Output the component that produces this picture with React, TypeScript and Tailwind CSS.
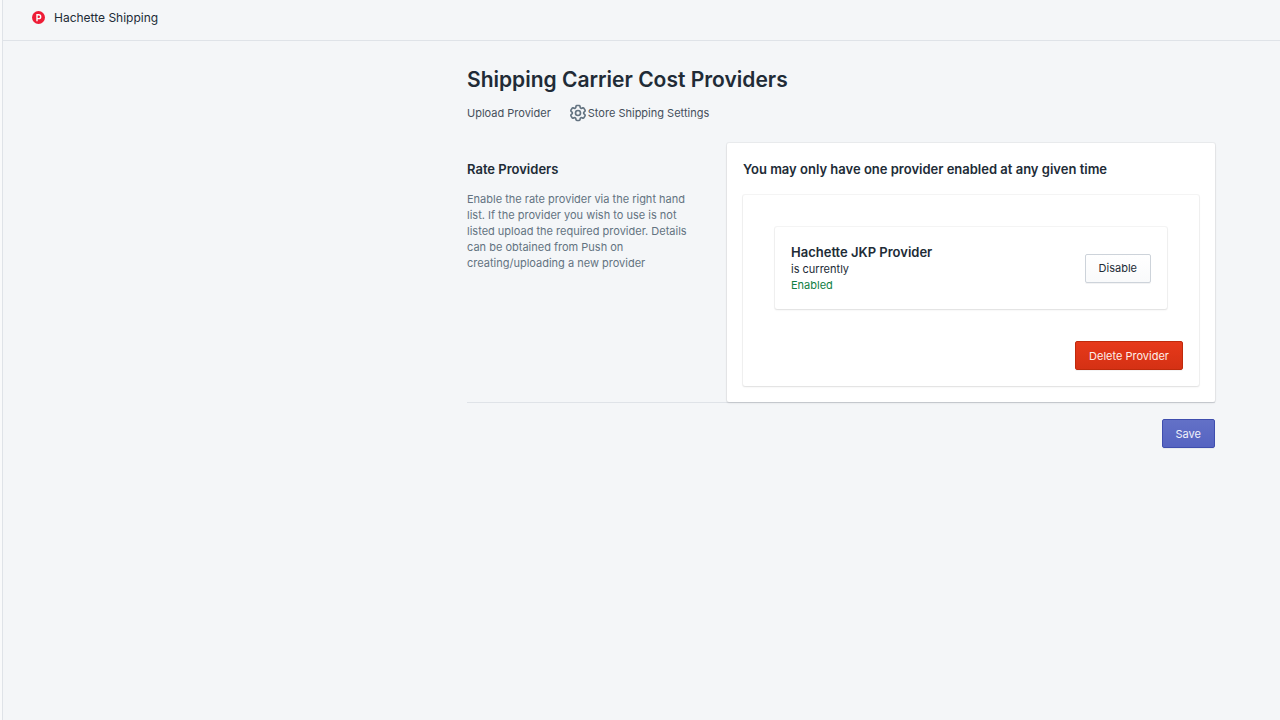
import type { ButtonHTMLAttributes } from "react";
import { clsx } from "clsx";
import { HiOutlineCog6Tooth } from "react-icons/hi2";

type Tone = "plain" | "danger" | "primary";

const tones: Record<Tone, string> = {
  plain: "border-[#cdd3da] bg-linear-to-b from-white to-[#f9fafb] text-[#212b36]",
  danger: "border-[#bf2a0c] bg-linear-to-b from-[#e6391a] to-[#d53114] text-[#fdeeea]",
  primary: "border-[#3f4eae] bg-linear-to-b from-[#6371c7] to-[#5563c1] text-[#f1f2fb]",
};

function Button({ tone = "plain", ...props }: ButtonHTMLAttributes<HTMLButtonElement> & { tone?: Tone }) {
  return (
    <button
      type="button"
      className={clsx(
        "h-[29px] shrink-0 rounded-xs border px-[13px] text-[11px] leading-4 shadow-[0_1px_0_rgba(22,29,37,0.05)]",
        tones[tone],
      )}
      {...props}
    />
  );
}

function Logo() {
  return (
    <svg viewBox="0 0 26 26" className="size-[13px]" aria-hidden="true">
      <circle cx="13" cy="13" r="13" fill="#ee1c36" />
      <path d="M10 20.5V7.5h3.5a3.9 3.9 0 0 1 0 7.8H10" fill="none" stroke="#fff" strokeWidth="2.8" />
    </svg>
  );
}

export default function App() {
  return (
    <div className="bg-[#f9fafb] pl-[2px] font-['Inter','Liberation_Sans',sans-serif] text-[11px] leading-4 text-[#212b36]">
      <div className="min-h-screen border-l border-[#dfe3e8] bg-[#f4f6f8]">
        <header className="flex h-[41px] items-start gap-[9px] border-b border-[#dfe3e8] px-[29px] pt-[11px]">
          <Logo />
          <span className="text-[12px] leading-[14px]">Hachette Shipping</span>
        </header>

        <main className="mr-[65px] ml-auto max-w-[748px] pt-6">
          <h1 className="text-[21px] leading-[30px] font-semibold">Shipping Carrier Cost Providers</h1>
          <nav className="mt-[10px] flex items-center gap-[17px] text-[#454f5b]">
            <a href="#upload">Upload Provider</a>
            <a href="#settings" className="flex items-center">
              <HiOutlineCog6Tooth className="-my-1 size-5 stroke-2 text-[#637381]" aria-hidden="true" />
              Store Shipping Settings
            </a>
          </nav>

          <div className="mt-[22px] flex border-b border-[#dfe3e8]">
            <section className="w-[260px] shrink-0 pt-4 pr-10">
              <h2 className="text-[13px] leading-5 font-semibold">Rate Providers</h2>
              <p className="mt-3 text-[#637381]">
                Enable the rate provider via the right hand list. If the provider you wish to use is not listed upload
                the required provider. Details can be obtained from Push on creating/uploading a new provider
              </p>
            </section>

            <section className="grow rounded-xs bg-white p-4 shadow-[0_0_0_1px_rgba(63,63,68,0.05),0_1px_2px_rgba(63,63,68,0.15)]">
              <h2 className="text-[13px] leading-5 font-semibold">You may only have one provider enabled at any given time</h2>
              <div className="mt-4 rounded-xs p-4 shadow-[0_0_0_1px_rgba(63,63,68,0.05),0_1px_2px_rgba(63,63,68,0.12)]">
                <div className="m-4 flex items-center justify-between rounded-xs p-4 shadow-[0_0_0_1px_rgba(63,63,68,0.05),0_1px_2px_rgba(63,63,68,0.12)]">
                  <div>
                    <h3 className="text-[13px] leading-[18px] font-semibold">Hachette JKP Provider</h3>
                    <p>is currently</p>
                    <p className="text-[#108043]">Enabled</p>
                  </div>
                  <Button>Disable</Button>
                </div>
                <div className="mt-8 flex justify-end">
                  <Button tone="danger">Delete Provider</Button>
                </div>
              </div>
            </section>
          </div>

          <div className="mt-4 flex justify-end">
            <Button tone="primary">Save</Button>
          </div>
        </main>
      </div>
    </div>
  );
}
